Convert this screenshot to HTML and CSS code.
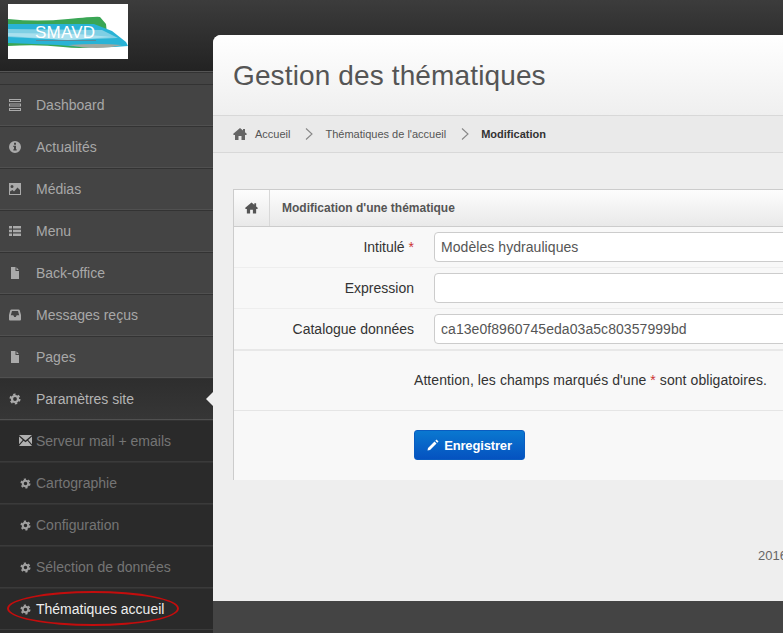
FILE: index.html
```html
<!DOCTYPE html>
<html lang="fr">
<head>
	<meta charset="utf-8">
	<title>Gestion des thématiques</title>
	<link rel="stylesheet" href="styles.css">
</head>
<body>

	<!-- icon set -->
	<svg class="icon-defs" aria-hidden="true">
		<symbol id="i-bars" viewBox="0 0 12 12"><path d="M0 0h12v3H0zM0 4.500h12v3H0zM0 9h12v3H0z" fill-rule="evenodd"/><path d="M1 1h10v1H1zM1 5.500h10v1H1zM1 10h10v1H1z" fill="#444"/></symbol>
		<symbol id="i-info" viewBox="0 0 12 12"><path fill-rule="evenodd" d="M6 0a6 6 0 1 1 0 12A6 6 0 0 1 6 0zM5 1.800v1.900h2V1.800zM4.300 4.800v1.100H5v2.400h-.7v1.100h3.400V8.300H7V4.800z"/></symbol>
		<symbol id="i-image" viewBox="0 0 12 12"><path fill-rule="evenodd" d="M0 0h12v12H0zM1 8.500V11h10V7L8.500 4.500 5 8.500 3.500 7zM3 2a1.500 1.500 0 1 0 0 3 1.500 1.500 0 0 0 0-3z"/></symbol>
		<symbol id="i-list" viewBox="0 0 12 12"><path d="M0 1h3v2.500H0zM4 1h8v2.500H4zM0 4.800h3v2.500H0zM4 4.800h8v2.500H4zM0 8.600h3v2.500H0zM4 8.600h8v2.500H4z"/></symbol>
		<symbol id="i-file" viewBox="0 0 12 12"><path d="M2 0h4.500v4H10v8H2zM7.500 0.300L9.800 3H7.500z"/></symbol>
		<symbol id="i-inbox" viewBox="0 0 12 12"><path fill-rule="evenodd" d="M2.500 .5h7q1 0 1.300 1L12 6v4.500q0 1-1 1H1q-1 0-1-1V6l1.200-4.500q.3-1 1.300-1zM3 2 1.800 6.300h2.500l.9 1.700h1.600l.9-1.700h2.500L9 2z"/></symbol>
		<symbol id="i-cog" viewBox="0 0 12 12"><circle cx="6" cy="6" r="3" fill="none" stroke="currentColor" stroke-width="2.200"/><circle cx="6" cy="6" r="4.600" fill="none" stroke="currentColor" stroke-width="1.800" stroke-dasharray="2.400 2.417"/></symbol>
		<symbol id="i-mail" viewBox="0 0 12 10"><path d="M0 0h12L6 5zM0 1.300 3.500 4.500 0 8.500zM12 1.300 8.500 4.500 12 8.500zM4.200 5.200 6 6.600l1.800-1.400L12 10H0z"/></symbol>
		<symbol id="i-home" viewBox="0 0 14 12"><path d="M7 0l3 2.600V1h2v3.300L14 6l-.8 1H12v5H8.500V8h-3v4H2V7H.8L0 6z"/></symbol>
		<symbol id="i-pencil" viewBox="0 0 12 12"><path d="M9.500.5l2 2-1.200 1.200-2-2zM7.500 2.500l2 2L3 11 .5 11.500 1 9z"/></symbol>
		<symbol id="i-chevron" viewBox="0 0 8 12"><path d="M1 .5 7 6 1 11.500" fill="none" stroke="currentColor" stroke-width="1.100"/></symbol>
	</svg>

	<div class="page">

		<div class="sidebar">
			<div class="brand">
				<div class="logo">
					<svg class="logo-waves" viewBox="0 0 120 55">
						<path d="M0 15 Q30 18 60 15 T92 13 L98 20 L100 40 Q80 46 55 43 T0 42z" fill="#3aa655"/>
						<path d="M0 20 L86 20 L104 27 L118 38 L120 42 Q90 45 50 41 L0 39z" fill="#29b3d6"/>
						<path d="M0 25 L94 26 L110 34 L60 36 L0 33z" fill="#7fcfe4"/>
						<path d="M0 29 L70 30 L104 33 L60 36 L0 32z" fill="#a9e0ee"/>
						<path d="M60 41 Q90 39 114 41 Q90 47 60 41z" fill="#a0a8a0"/>
						<path d="M28 36h60v1H28z" fill="#5a8a9a"/>
					</svg>
					<span class="logo-name">SMAVD</span>
				</div>
			</div>

			<ul class="nav">
				<li class="nav-item"><svg class="ico"><use href="#i-bars"/></svg>Dashboard</li>
				<li class="nav-item"><svg class="ico"><use href="#i-info"/></svg>Actualités</li>
				<li class="nav-item"><svg class="ico"><use href="#i-image"/></svg>Médias</li>
				<li class="nav-item"><svg class="ico"><use href="#i-list"/></svg>Menu</li>
				<li class="nav-item"><svg class="ico"><use href="#i-file"/></svg>Back-office</li>
				<li class="nav-item"><svg class="ico"><use href="#i-inbox"/></svg>Messages reçus</li>
				<li class="nav-item"><svg class="ico"><use href="#i-file"/></svg>Pages</li>
				<li class="nav-item nav-open"><svg class="ico"><use href="#i-cog"/></svg>Paramètres site</li>
				<li class="nav-sub"><svg class="ico ico-mail"><use href="#i-mail"/></svg>Serveur mail + emails</li>
				<li class="nav-sub"><svg class="ico"><use href="#i-cog"/></svg>Cartographie</li>
				<li class="nav-sub"><svg class="ico"><use href="#i-cog"/></svg>Configuration</li>
				<li class="nav-sub"><svg class="ico"><use href="#i-cog"/></svg>Sélection de données</li>
				<li class="nav-sub nav-current"><svg class="ico"><use href="#i-cog"/></svg>Thématiques accueil<span class="ring"></span></li>
			</ul>
		</div>

		<div class="main">
			<div class="content">
				<div class="title-bar">
					<h1>Gestion des thématiques</h1>
				</div>

				<div class="crumbs">
					<svg class="crumb-home"><use href="#i-home"/></svg>
					<span>Accueil</span>
					<svg class="crumb-sep"><use href="#i-chevron"/></svg>
					<span>Thématiques de l'accueil</span>
					<svg class="crumb-sep"><use href="#i-chevron"/></svg>
					<b>Modification</b>
				</div>

				<div class="widget">
					<div class="widget-head">
						<div class="widget-icon"><svg><use href="#i-home"/></svg></div>
						<h2>Modification d'une thématique</h2>
					</div>

					<div class="field">
						<label>Intitulé <em>*</em></label>
						<input type="text" value="Modèles hydrauliques">
					</div>
					<div class="field">
						<label>Expression</label>
						<input type="text" value="">
					</div>
					<div class="field field-last">
						<label>Catalogue données</label>
						<input type="text" value="ca13e0f8960745eda03a5c80357999bd">
					</div>

					<p class="notice">Attention, les champs marqués d'une <em>*</em> sont obligatoires.</p>

					<div class="actions">
						<button><svg><use href="#i-pencil"/></svg>Enregistrer</button>
					</div>
				</div>

				<div class="copyright">2016</div>
			</div>
			<div class="bottom"></div>
		</div>

	</div>

</body>
</html>
```

FILE: styles.css
```css
html, body {
	margin: 0;
	padding: 0;
	height: 100%;
}
body {
	font-family: "Liberation Sans", Arial, sans-serif;
	font-size: 14px;
	color: #333;
	background: #444;
	overflow: hidden;
}
.icon-defs {
	display: none;
}

.page {
	display: flex;
	height: 633px;
	overflow: hidden;
	background: linear-gradient(#3c3c3c, #222 72px, #444 72px);
}

/* sidebar */
.sidebar {
	width: 213px;
	flex: none;
	display: flex;
	flex-direction: column;
}
.brand {
	height: 72px;
	flex: none;
	box-sizing: border-box;
	padding: 4px 0 0 8px;
	border-bottom: 1px solid #555;
}
.logo {
	position: relative;
	width: 120px;
	height: 55px;
	background: #fff;
}
.logo-waves {
	display: block;
	width: 120px;
	height: 55px;
}
.logo-name {
	position: absolute;
	top: 19px;
	left: 27px;
	font-size: 17px;
	letter-spacing: 0.2px;
	color: #fff;
}
.nav {
	list-style: none;
	flex: 1;
	margin: 0;
	padding: 0;
	background: #2a2a2a;
	border-top: 1px solid #333;
}
.nav::before {
	content: "";
	display: block;
	height: 11px;
	background: #444;
}
.nav-item, .nav-sub {
	position: relative;
	display: flex;
	align-items: center;
	height: 42px;
	box-sizing: border-box;
	background: #444;
	border-top: 1px solid #333;
	border-bottom: 1px solid #505050;
	color: #a8a8a8;
}
.nav-item .ico {
	width: 12px;
	height: 12px;
	margin: 0 15px 0 9px;
	fill: currentColor;
	color: #aaa;
}
.nav-open {
	background: linear-gradient(#2e2e2e, #363636);
	color: #b4b4b4;
}
.nav-open::after {
	content: "";
	position: absolute;
	right: 0;
	top: 13px;
	border: 7px solid transparent;
	border-left: 0;
	border-right-color: #eee;
}
.nav-sub {
	background: #2a2a2a;
	border-bottom-color: #3a3a3a;
	color: #757575;
}
.nav-sub .ico {
	width: 11px;
	height: 11px;
	margin: 0 5px 0 20px;
	fill: currentColor;
	color: #a0a0a0;
}
.nav-sub .ico-mail {
	width: 13px;
	height: 11px;
	margin: -2px 4px 0 19px;
	color: #b0b0b0;
}
.nav-current {
	color: #eee;
}
.ring {
	position: absolute;
	left: 7px;
	top: 2px;
	width: 168px;
	height: 31px;
	border: 2px solid #c30d0d;
	border-radius: 50%;
}

/* main column */
.main {
	flex: 1;
	min-width: 0;
	margin-top: 35px;
	display: flex;
	flex-direction: column;
}
.content {
	height: 566px;
	background: #eee;
	border-radius: 8px 0 0 0;
	overflow: hidden;
}
.bottom {
	flex: 1;
	background: #444;
}
.title-bar {
	height: 80px;
	box-sizing: border-box;
	padding: 23px 0 0 20px;
	background: linear-gradient(#fff, #efefef);
}
h1 {
	margin: 0;
	font-size: 28px;
	font-weight: normal;
	letter-spacing: 0.13px;
	line-height: 36px;
	color: #555;
}
.crumbs {
	display: flex;
	align-items: center;
	height: 38px;
	box-sizing: border-box;
	padding-left: 20px;
	font-size: 11px;
	color: #555;
	background: #eaeaea;
	border-top: 1px solid #d8d8d8;
	border-bottom: 1px solid #d8d8d8;
}
.crumbs b {
	color: #333;
}
.crumb-home {
	width: 14px;
	height: 12px;
	margin-right: 8px;
	fill: #666;
}
.crumb-sep {
	width: 8px;
	height: 12px;
	margin: 0 12px 0 15px;
	color: #888;
}

/* form box, wider than the window */
.widget {
	width: 800px;
	margin: 36px 0 0 20px;
	background: #f8f8f8;
	border-left: 1px solid #ccc;
}
.widget-head {
	display: flex;
	align-items: center;
	height: 38px;
	box-sizing: border-box;
	background: linear-gradient(#fdfdfd, #e9e9e9);
	border-top: 1px solid #ccc;
	border-bottom: 1px solid #ccc;
}
.widget-icon {
	display: flex;
	align-items: center;
	justify-content: center;
	width: 35px;
	height: 100%;
	border-right: 1px solid #d8d8d8;
}
.widget-icon svg {
	width: 13px;
	height: 12px;
	fill: #555;
}
h2 {
	margin: 0 0 0 12px;
	font-size: 12px;
	color: #555;
}
.field {
	display: flex;
	align-items: center;
	height: 41px;
	box-sizing: border-box;
	border-bottom: 1px solid #eee;
}
.field-last {
	height: 42px;
	border-bottom: 2px solid #e8e8e8;
}
.field label {
	width: 180px;
	text-align: right;
	margin-right: 20px;
	color: #333;
}
.field em, .notice em {
	font-style: normal;
	color: #c33;
}
.field input {
	width: 500px;
	height: 30px;
	box-sizing: border-box;
	padding: 0 6px;
	font: 14px "Liberation Sans", Arial, sans-serif;
	letter-spacing: 0.06px;
	color: #555;
	background: #fff;
	border: 1px solid #ccc;
	border-radius: 4px;
}
.notice {
	margin: 0;
	height: 60px;
	box-sizing: border-box;
	padding: 21px 0 0 180px;
	line-height: 17px;
	letter-spacing: 0.07px;
	border-bottom: 1px solid #e5e5e5;
}
.actions {
	height: 69px;
	box-sizing: border-box;
	padding: 19px 0 0 180px;
}
button {
	display: flex;
	align-items: center;
	justify-content: center;
	width: 111px;
	height: 30px;
	padding: 0;
	font: bold 13px "Liberation Sans", Arial, sans-serif;
	letter-spacing: -0.15px;
	color: #fff;
	background: linear-gradient(#0a78d0, #0552c0);
	border: 1px solid #0a5cc0;
	border-radius: 3px;
}
button svg {
	width: 12px;
	height: 12px;
	margin-right: 5px;
	fill: #fff;
}
.copyright {
	margin: 69px 0 0 545px;
	font-size: 13px;
	line-height: 14px;
	color: #666;
}
```
